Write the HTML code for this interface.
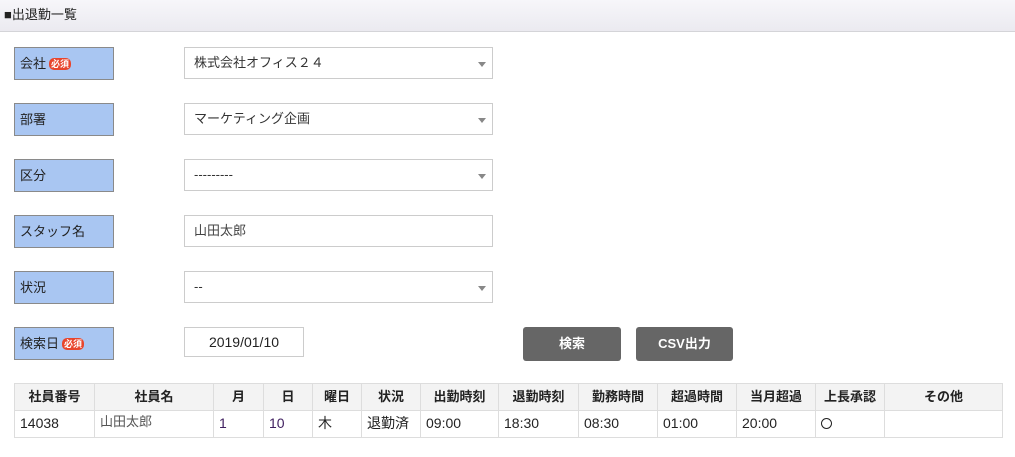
<!DOCTYPE html>
<html><head><meta charset="utf-8"><style>
*{box-sizing:border-box;margin:0;padding:0}
body{width:1015px;height:457px;background:#fff;font-family:"Liberation Sans","Noto Sans CJK JP",sans-serif;font-size:13px;color:#222;position:relative;overflow:hidden}
.hd{position:absolute;left:0;top:0;width:1015px;height:32px;background:linear-gradient(#f7f6fa,#ebeaf0);border-bottom:1px solid #d4d4d8;padding-left:4px;line-height:30px;font-size:13px}
.lb{position:absolute;left:14px;width:100px;height:33px;background:#a9c6f2;border:1px solid #8a8a8a;padding-left:5px;line-height:31px;font-size:13px}
.req{display:inline-block;background:#e8452c;color:#fff;font-size:9px;border-radius:5px;padding:0 2px;line-height:12px;margin-left:3px;vertical-align:1px;font-weight:bold}
.sel{position:absolute;left:184px;width:309px;height:32px;border:1px solid #ccc;padding-left:9px;line-height:30px;font-size:13px;color:#333}
.arr:after{content:"";position:absolute;right:6px;top:14px;border-left:4px solid transparent;border-right:4px solid transparent;border-top:5px solid #888}
.inp{position:absolute;left:184px;top:327px;width:120px;height:30px;border:1px solid #ccc;text-align:center;line-height:28px;font-size:14px}
.btn{position:absolute;top:327px;height:34px;background:#666;border-radius:3px;color:#fff;font-weight:bold;text-align:center;line-height:33px;font-size:13px}
table{position:absolute;left:14px;top:383px;border-collapse:collapse}
td,th{border:1px solid #ddd;height:27px;font-size:13px;line-height:16px}
th{background:#f3f3f3;font-weight:bold;text-align:center}
td{padding-left:5px;font-size:14px;vertical-align:top;padding-top:4px}
.circ{display:inline-block;width:11px;height:11px;border:1px solid #222;border-radius:50%;margin-top:3px}
</style></head><body>
<div class="hd">■出退勤一覧</div>
<div class="lb" style="top:47px">会社<span class="req">必須</span></div>
<div class="lb" style="top:103px">部署</div>
<div class="lb" style="top:159px">区分</div>
<div class="lb" style="top:215px">スタッフ名</div>
<div class="lb" style="top:271px">状況</div>
<div class="lb" style="top:327px">検索日<span class="req">必須</span></div>
<div class="sel arr" style="top:47px">株式会社オフィス２４</div>
<div class="sel arr" style="top:103px">マーケティング企画</div>
<div class="sel arr" style="top:159px">---------</div>
<div class="sel" style="top:215px;color:#444">山田太郎</div>
<div class="sel arr" style="top:271px">--</div>
<div class="inp">2019/01/10</div>
<div class="btn" style="left:523px;width:98px">検索</div>
<div class="btn" style="left:636px;width:97px">CSV出力</div>
<table>
<tr><th style="width:80px">社員番号</th><th style="width:119px">社員名</th><th style="width:50px">月</th><th style="width:49px">日</th><th style="width:49px">曜日</th><th style="width:59px">状況</th><th style="width:78px">出勤時刻</th><th style="width:80px">退勤時刻</th><th style="width:79px">勤務時間</th><th style="width:79px">超過時間</th><th style="width:79px">当月超過</th><th style="width:69px">上長承認</th><th style="width:118px">その他</th></tr>
<tr><td>14038</td><td style="color:#555;font-size:13px;padding-top:3px">山田太郎</td><td style="color:#402060">1</td><td style="color:#402060">10</td><td>木</td><td>退勤済</td><td>09:00</td><td>18:30</td><td>08:30</td><td>01:00</td><td>20:00</td><td><span class="circ"></span></td><td></td></tr>
</table>
</body></html>
